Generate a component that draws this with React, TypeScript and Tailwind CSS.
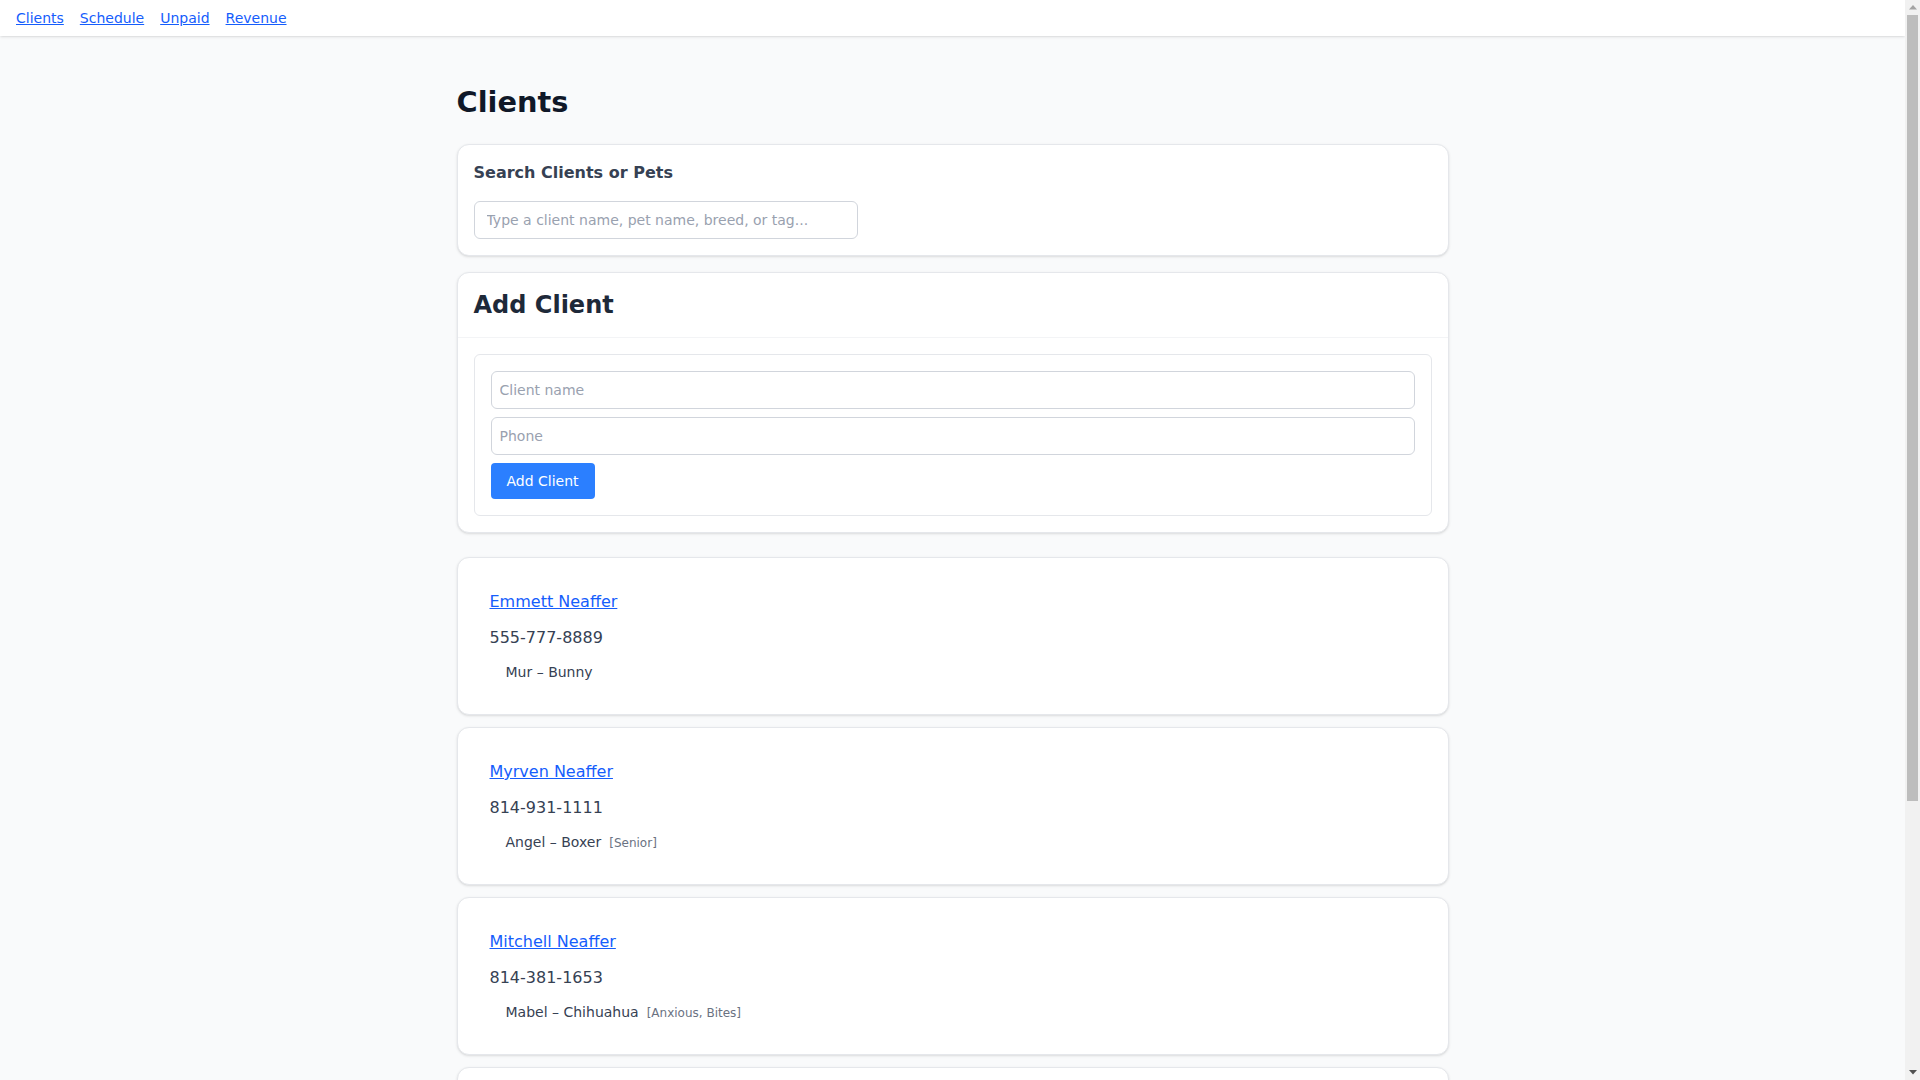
import React from "react";

interface Pet {
  name: string;
  breed: string;
  tags?: string[];
}

interface Client {
  name: string;
  phone: string;
  pets: Pet[];
}

const clients: Client[] = [
  { name: "Emmett Neaffer", phone: "555-777-8889", pets: [{ name: "Mur", breed: "Bunny" }] },
  { name: "Myrven Neaffer", phone: "814-931-1111", pets: [{ name: "Angel", breed: "Boxer", tags: ["Senior"] }] },
  { name: "Mitchell Neaffer", phone: "814-381-1653", pets: [{ name: "Mabel", breed: "Chihuahua", tags: ["Anxious", "Bites"] }] },
  { name: "Tamsin Orlowe", phone: "814-220-4417", pets: [{ name: "Biscuit", breed: "Beagle" }] },
  { name: "Walt Pennick", phone: "555-310-0092", pets: [{ name: "Juno", breed: "Golden Retriever", tags: ["Puppy"] }] },
];

function NavBar() {
  return (
    <nav className="bg-white shadow px-4 py-2 flex gap-4 text-sm">
      {["Clients", "Schedule", "Unpaid", "Revenue"].map((l) => (
        <a key={l} href="#" className="text-blue-600 underline">
          {l}
        </a>
      ))}
    </nav>
  );
}

// browser scrollbar as it appears in the screenshot
function Scrollbar() {
  return (
    <div className="w-[15px] h-screen flex-shrink-0 bg-[#f1f1f1] flex flex-col">
      <div className="h-[15px] flex items-center justify-center">
        <svg width="8" height="5" viewBox="0 0 8 5">
          <polygon points="4,0 8,4.5 0,4.5" fill="#a3a3a3" />
        </svg>
      </div>
      <div className="h-[786px] mx-[2px] bg-[#bdbdbd]" />
      <div className="flex-1" />
      <div className="h-[15px] flex items-center justify-center">
        <svg width="8" height="5" viewBox="0 0 8 5">
          <polygon points="0,0 8,0 4,4.5" fill="#505050" />
        </svg>
      </div>
    </div>
  );
}

function ClientCard({ client }: { client: Client }) {
  return (
    <div className="bg-white border border-gray-200 rounded-xl shadow-sm p-4">
      <div className="p-4">
        <a href="#" className="block text-base text-blue-600 underline leading-6">
          {client.name}
        </a>
        <p className="mt-3 text-base text-gray-700 leading-6">{client.phone}</p>
        <ul className="mt-3 pl-4 text-sm text-gray-700">
          {client.pets.map((p) => (
            <li key={p.name} className="leading-5">
              {p.name} – {p.breed}
              {p.tags && (
                <span className="ml-2 text-xs text-gray-500">[{p.tags.join(", ")}]</span>
              )}
            </li>
          ))}
        </ul>
      </div>
    </div>
  );
}

export default function App() {
  return (
    <div className="h-screen flex overflow-hidden font-['DejaVu_Sans',sans-serif]">
      <div className="flex-1 min-w-0 h-screen overflow-hidden bg-gray-50">
        <NavBar />
        <main className="max-w-5xl mx-auto px-4 pt-12 pb-12">
          <h1 className="text-[28.8px] leading-9 font-bold text-gray-900 mb-6">Clients</h1>

          <section className="bg-white border border-gray-200 rounded-xl shadow-sm p-4 mb-4">
            <h2 className="text-base font-bold text-gray-700 leading-6 mb-4">Search Clients or Pets</h2>
            <input
              type="text"
              placeholder="Type a client name, pet name, breed, or tag..."
              className="w-96 border border-gray-300 rounded-md px-3 py-2 text-sm leading-5 placeholder:text-gray-400 outline-none"
            />
          </section>

          <section className="bg-white border border-gray-200 rounded-xl shadow-sm mb-6">
            <div className="px-4 py-4 border-b border-gray-100">
              <h2 className="text-2xl font-bold text-gray-800 leading-8">Add Client</h2>
            </div>
            <div className="p-4">
              <div className="border border-gray-200 rounded-md p-4 flex flex-col gap-2">
                <input
                  type="text"
                  placeholder="Client name"
                  className="w-full border border-gray-300 rounded-md px-2 py-2 text-sm leading-5 placeholder:text-gray-400 outline-none"
                />
                <input
                  type="text"
                  placeholder="Phone"
                  className="w-full border border-gray-300 rounded-md px-2 py-2 text-sm leading-5 placeholder:text-gray-400 outline-none"
                />
                <div>
                  <button className="bg-blue-500 text-white text-sm leading-5 px-4 py-2 rounded">Add Client</button>
                </div>
              </div>
            </div>
          </section>

          <div className="flex flex-col gap-3">
            {clients.map((c) => (
              <ClientCard key={c.name} client={c} />
            ))}
          </div>
        </main>
      </div>
      <Scrollbar />
    </div>
  );
}
